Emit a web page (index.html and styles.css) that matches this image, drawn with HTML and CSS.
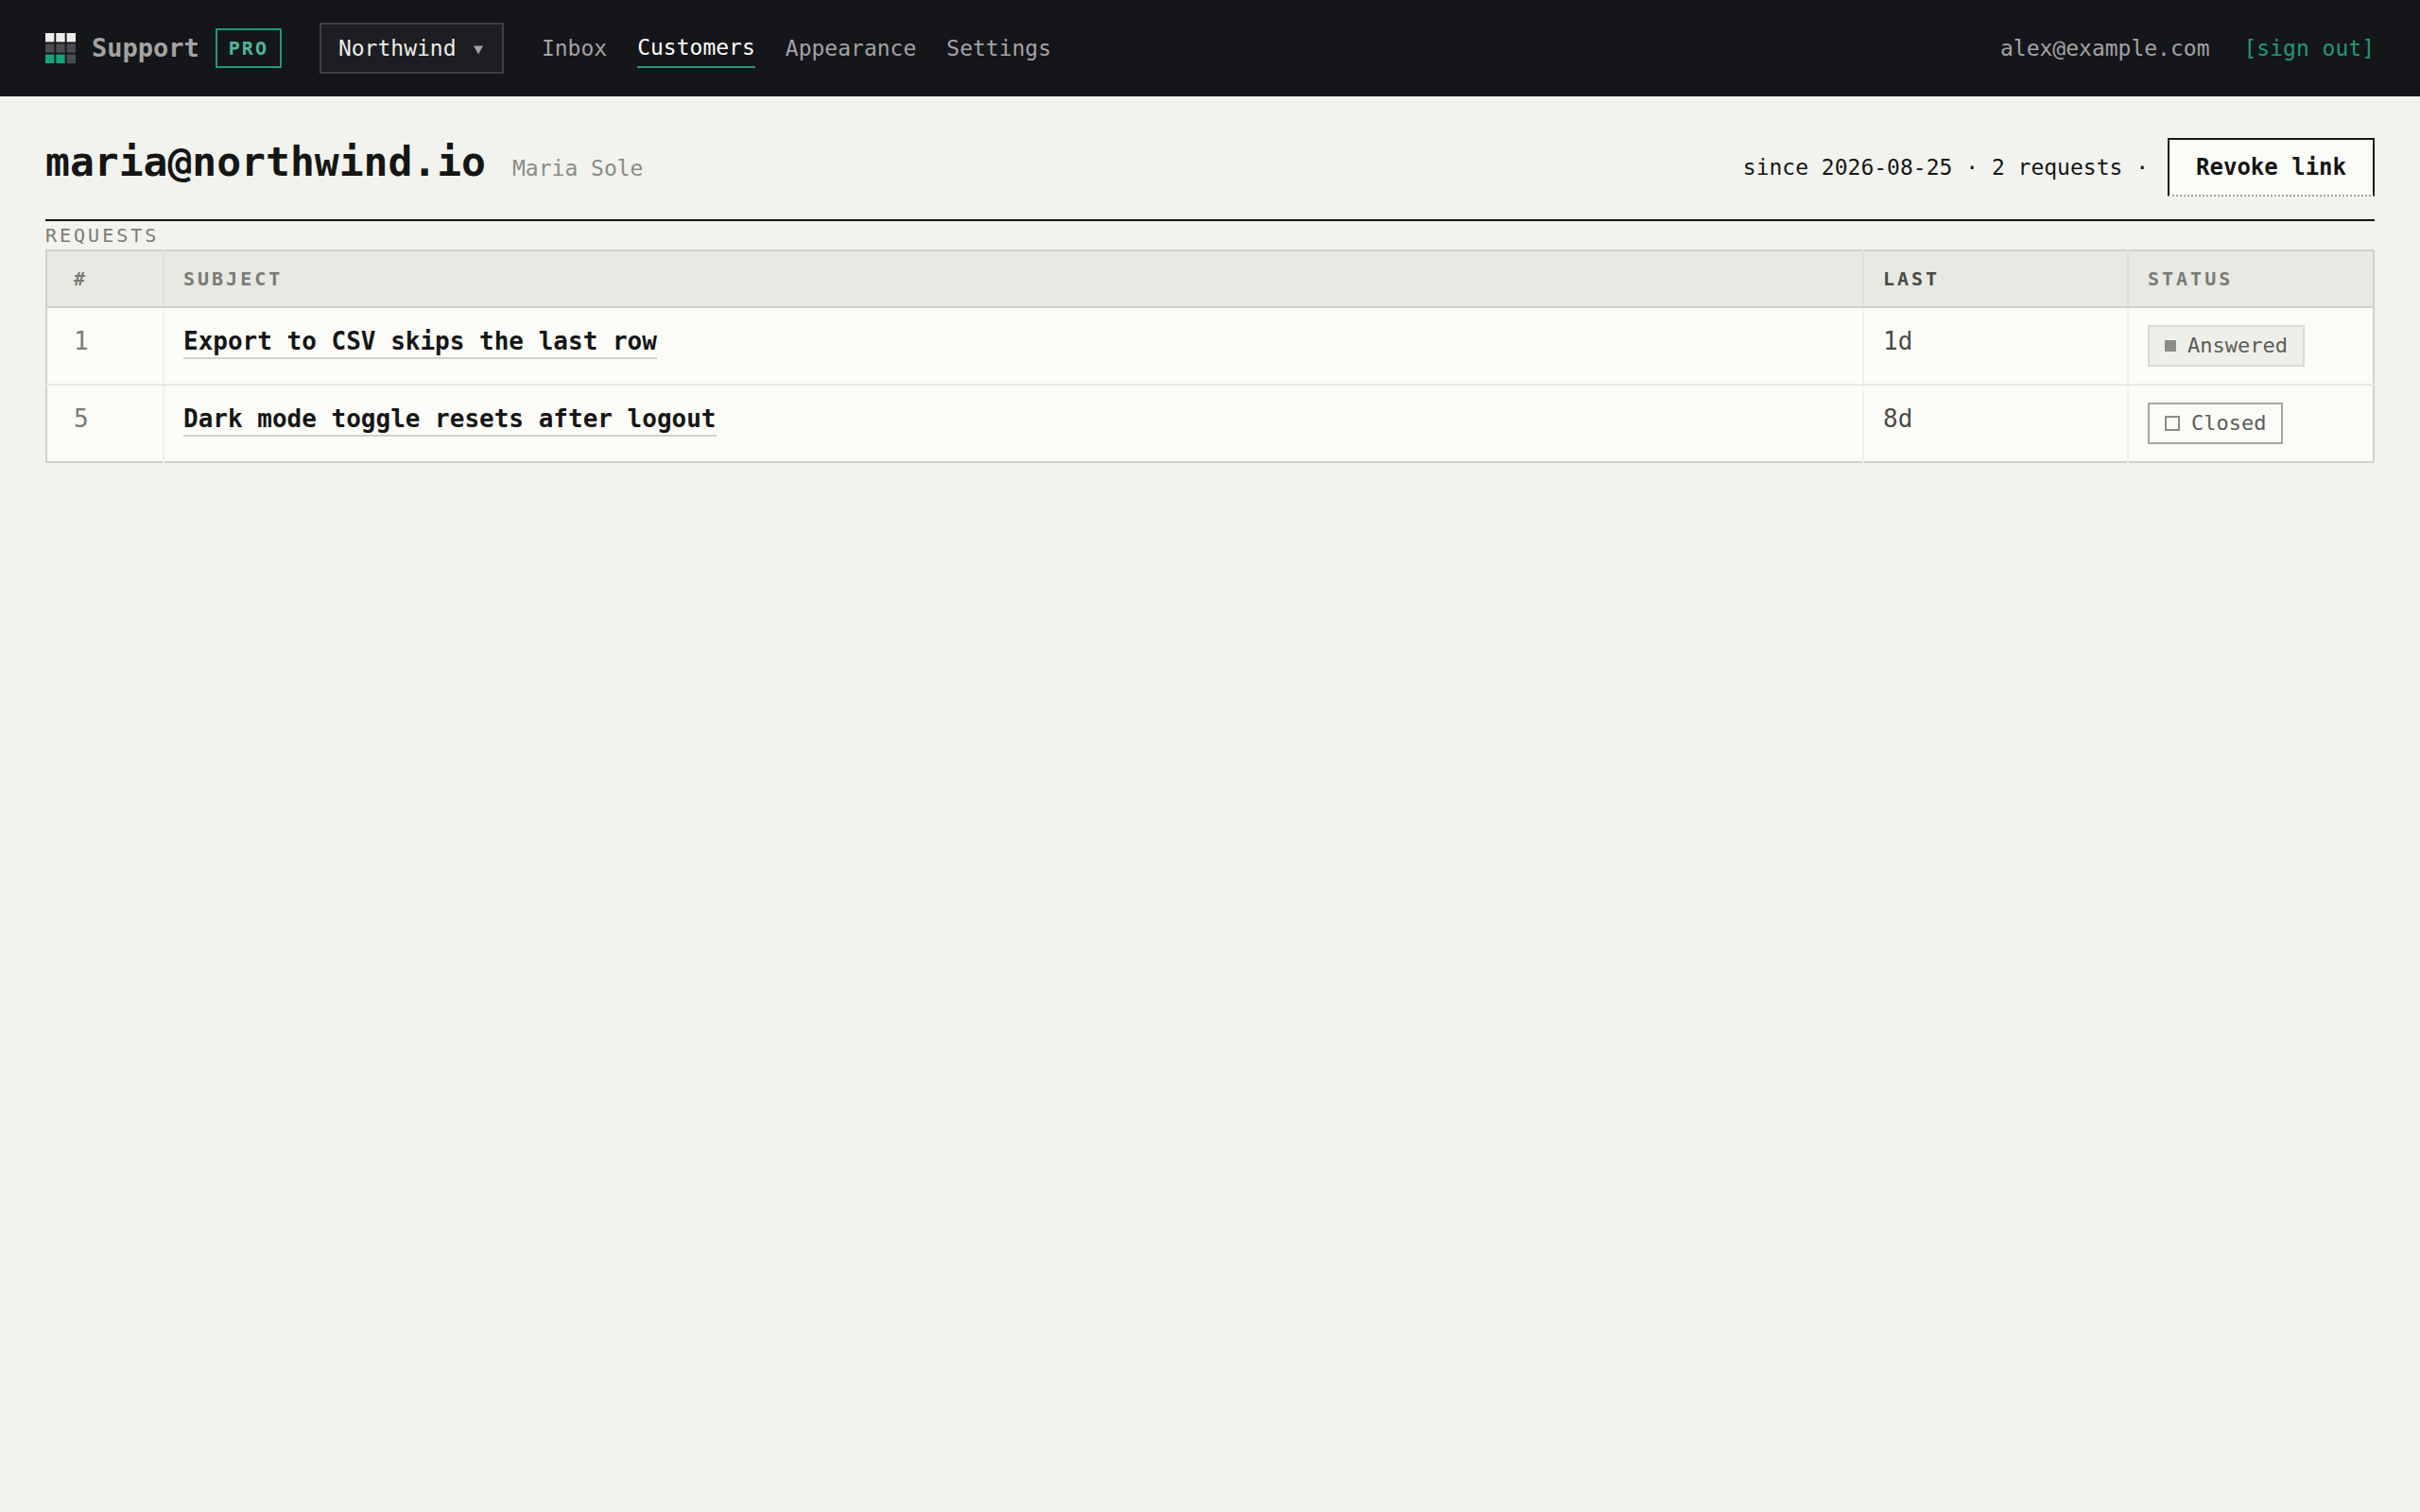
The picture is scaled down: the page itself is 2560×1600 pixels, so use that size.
FILE: index.html
```
<!DOCTYPE html>
<html lang="en">
  <head>
    <meta charset="utf-8">
    <meta name="viewport" content="width=device-width, initial-scale=1">
    <title>maria@northwind.io - Support</title>
    <link rel="stylesheet" href="styles.css">
  </head>

  <body>
    <header class="topbar">
      <div class="brand">
        <svg class="logo" viewBox="0 0 32 32" aria-hidden="true">
          <g fill="#ecede8">
            <rect x="0" y="0" width="9.4" height="9.4"/>
            <rect x="11.3" y="0" width="9.4" height="9.4"/>
            <rect x="22.6" y="0" width="9.4" height="9.4"/>
          </g>
          <g fill="#4b4c50">
            <rect x="0" y="11.3" width="9.4" height="9.4"/>
            <rect x="11.3" y="11.3" width="9.4" height="9.4"/>
            <rect x="22.6" y="11.3" width="9.4" height="9.4"/>
            <rect x="22.6" y="22.6" width="9.4" height="9.4"/>
          </g>
          <g fill="#15a37a">
            <rect x="0" y="22.6" width="9.4" height="9.4"/>
            <rect x="11.3" y="22.6" width="9.4" height="9.4"/>
          </g>
        </svg>
        <span class="brand-name">Support</span>
        <span class="plan">PRO</span>
      </div>

      <div class="picker">
        <select class="picker-select" aria-label="Project">
          <option>Northwind</option>
        </select>
        <svg class="picker-arrow" viewBox="0 0 10 10" aria-hidden="true">
          <path d="M0 0.5h10L5 9.5z" fill="#a3a3a3"/>
        </svg>
      </div>

      <nav class="nav">
        <a class="nav-link" href="#inbox">Inbox</a>
        <a class="nav-link active" href="#customers" aria-current="page">Customers</a>
        <a class="nav-link" href="#appearance">Appearance</a>
        <a class="nav-link" href="#settings">Settings</a>
      </nav>

      <div class="account">
        <span>alex@example.com</span>
        <a class="sign-out" href="#sign-out">[sign out]</a>
      </div>
    </header>

    <main class="page">
      <div class="page-head">
        <div class="customer">
          <h1 class="customer-email">maria@northwind.io</h1>
          <span class="customer-name">Maria Sole</span>
        </div>
        <div class="customer-meta">
          <span>since 2026-08-25 · 2 requests ·</span>
          <button class="revoke" type="button">Revoke link</button>
        </div>
      </div>

      <h2 class="section-title" id="requests">REQUESTS</h2>
      <table class="requests" aria-labelledby="requests">
        <colgroup>
          <col class="col-id">
          <col>
          <col class="col-last">
          <col class="col-status">
        </colgroup>
        <thead>
          <tr>
            <th>#</th>
            <th>SUBJECT</th>
            <th class="sorted">LAST</th>
            <th>STATUS</th>
          </tr>
        </thead>
        <tbody>
          <tr>
            <td class="id">1</td>
            <td><a class="subject" href="#request-1">Export to CSV skips the last row</a></td>
            <td>1d</td>
            <td><span class="status answered">Answered</span></td>
          </tr>
          <tr>
            <td class="id">5</td>
            <td><a class="subject" href="#request-5">Dark mode toggle resets after logout</a></td>
            <td>8d</td>
            <td><span class="status closed">Closed</span></td>
          </tr>
        </tbody>
      </table>
    </main>
  </body>
</html>
```

FILE: styles.css
```
*,
*::before {
  box-sizing: border-box;
}
body {
  margin: 0;
  background-color: #f2f3ee;
  color: #151614;
  font-family: "DejaVu Sans Mono", monospace;
  font-size: 23px;
  line-height: 32px;
}
a {
  color: inherit;
  text-decoration: none;
}

/* top bar */
.topbar {
  display: flex;
  align-items: center;
  gap: 40px;
  padding: 24px 48px;
  background-color: #15161a;
  color: #a3a3a3;
}
.brand {
  display: flex;
  align-items: center;
  gap: 17px;
}
.logo {
  width: 32px;
  height: 32px;
}
.brand-name {
  font-size: 27px;
  font-weight: bold;
}
.plan {
  padding: 3px 12px;
  border: 2px solid #1f9a74;
  color: #4cb898;
  font-size: 20px;
  font-weight: bold;
  letter-spacing: 2px;
}
.picker {
  position: relative;
}
.picker-select {
  display: block;
  appearance: none;
  height: 54px;
  padding: 0 48px 0 18px;
  border: 2px solid #3f4044;
  border-radius: 0;
  background-color: #1d1e22;
  color: #ecede8;
  font: inherit;
}
.picker-arrow {
  position: absolute;
  top: 24px;
  right: 22px;
  width: 10px;
  height: 10px;
  pointer-events: none;
}
.nav {
  display: flex;
  align-items: center;
  gap: 32px;
}
.nav-link {
  padding: 4px 0;
}
.nav-link.active {
  border-bottom: 2px solid #2a9475;
  color: #ffffff;
}
.account {
  display: flex;
  gap: 36px;
  margin-left: auto;
}
.sign-out {
  color: #1f9a74;
}

/* customer heading */
.page {
  padding: 44px 48px;
}
.page-head {
  display: flex;
  justify-content: space-between;
  align-items: flex-start;
  padding-bottom: 24px;
  border-bottom: 2px solid #151614;
}
.customer {
  display: flex;
  align-items: baseline;
  gap: 28px;
}
.customer-email {
  margin: 0;
  font-size: 43px;
  line-height: 50px;
}
.customer-name {
  color: #8b8c85;
}
.customer-meta {
  display: flex;
  align-items: center;
  gap: 20px;
}
.revoke {
  height: 62px;
  padding: 0 28px;
  border: 2px solid #151614;
  border-bottom: 2px dotted #a3a39e;
  background-color: #fbfbf8;
  color: #151614;
  font: inherit;
  font-size: 24px;
  font-weight: bold;
  cursor: pointer;
}

/* requests */
.section-title {
  margin: 0;
  color: #7a7b74;
  font-size: 20px;
  font-weight: normal;
  letter-spacing: 3px;
  line-height: 30px;
}
.requests {
  width: 100%;
  table-layout: fixed;
  border-collapse: collapse;
  border: 2px solid #d0d1ca;
}
.col-id {
  width: 124px;
}
.col-last {
  width: 280px;
}
.col-status {
  width: 260px;
}
th,
td {
  padding: 18px 20px;
  text-align: left;
  vertical-align: top;
}
th:first-child,
td:first-child {
  padding-left: 28px;
}
th {
  padding-top: 14px;
  padding-bottom: 14px;
  border-bottom: 2px solid #d0d1ca;
  background-color: #e8e9e3;
  color: #7a7b74;
  font-size: 20px;
  letter-spacing: 3px;
  line-height: 30px;
}
th:not(:last-child) {
  border-right: 2px solid #dfe0da;
}
th.sorted {
  color: #4a4b46;
}
td {
  background-color: #fbfbf8;
  color: #4a4b46;
  font-size: 26px;
  line-height: 34px;
}
td:not(:last-child) {
  border-right: 2px solid #f1f1ed;
}
tbody tr:not(:last-child) td {
  border-bottom: 2px solid #e8e9e5;
}
td.id {
  color: #7a7b74;
}
.subject {
  padding-bottom: 2px;
  border-bottom: 2px solid #d0d1ca;
  color: #151614;
  font-weight: bold;
}
.status {
  display: inline-flex;
  align-items: center;
  gap: 12px;
  padding: 4px 16px;
  border: 2px solid #dadbd4;
  font-size: 22px;
  line-height: 32px;
  vertical-align: top;
  color: #5c5d57;
}
.status::before {
  content: "";
  width: 12px;
  height: 12px;
  background-color: #8b8c85;
}
.status.answered {
  background-color: #efefe9;
}
.status.closed {
  border-color: #a6a7a3;
}
.status.closed::before {
  width: 16px;
  height: 16px;
  border: 2px solid #8b8c85;
  background-color: transparent;
}
```
